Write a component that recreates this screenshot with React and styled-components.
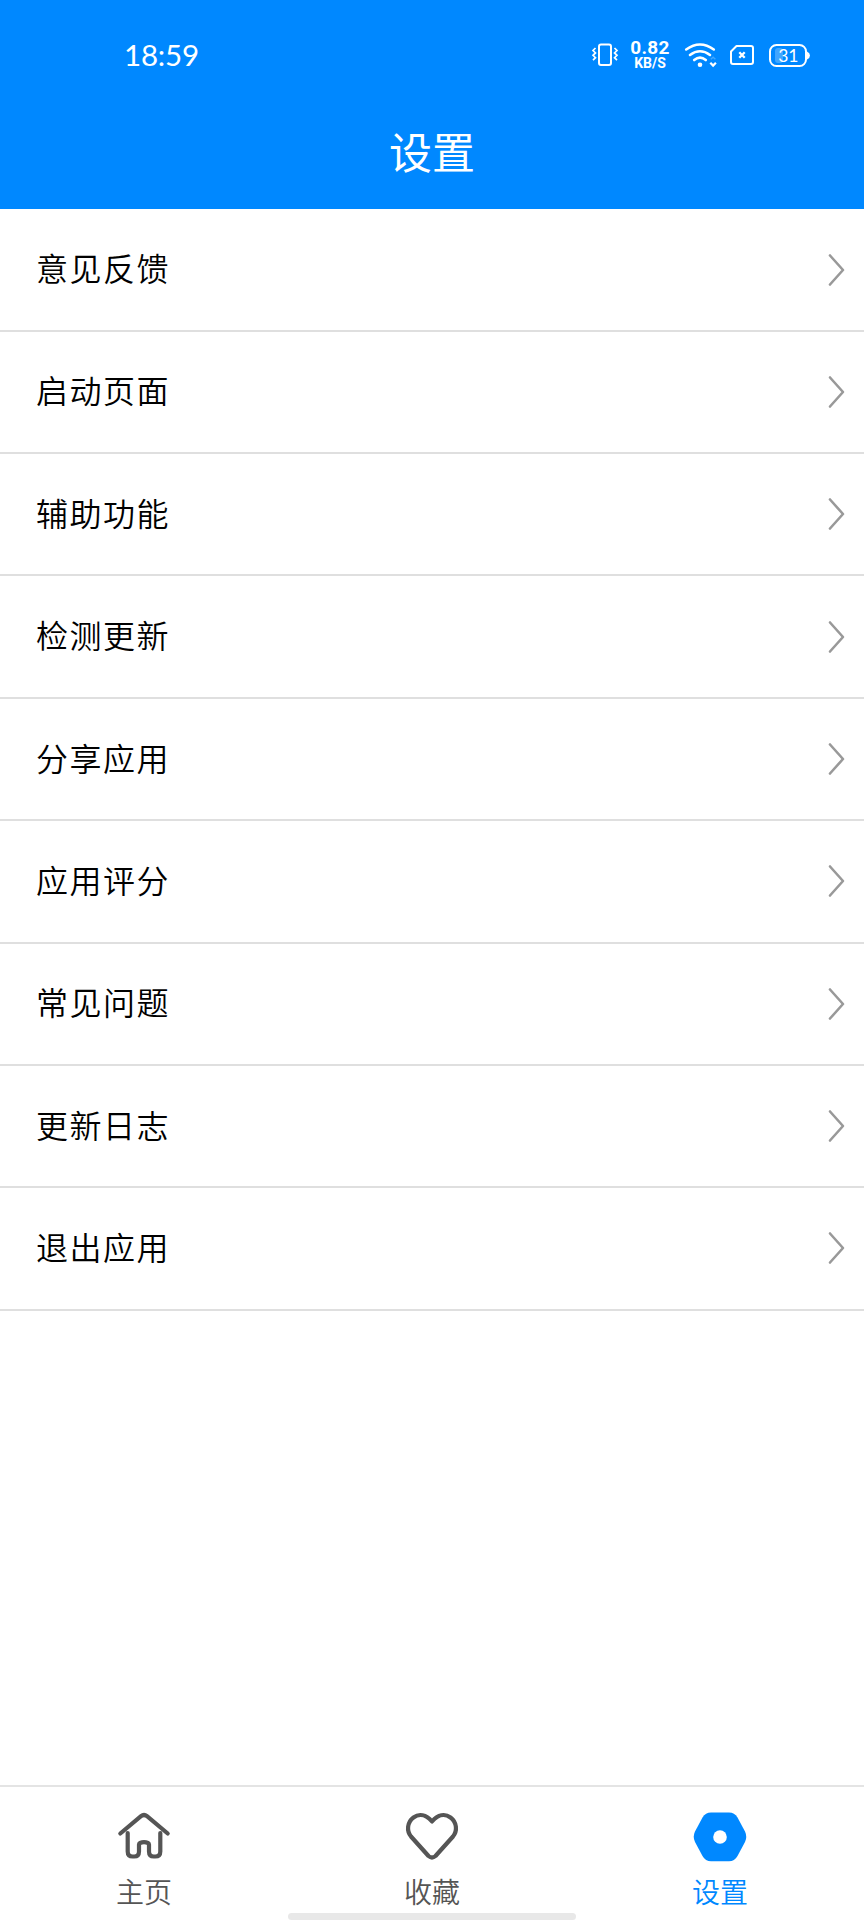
import React from "react";
import styled, { createGlobalStyle } from "styled-components";

const GlobalStyle = createGlobalStyle`
	* {
		box-sizing: border-box;
	}
	body {
		margin: 0;
		background-color: #fff;
		font-family: "Noto Sans CJK SC", sans-serif;
	}
`;

const Screen = styled.div`
	display: flex;
	flex-direction: column;
	width: 864px;
	height: 1920px;
	overflow: hidden;
	background-color: #fff;
`;

const Header = styled.header`
	height: 209.4px;
	flex-shrink: 0;
	background-color: #0088ff;
	color: #fff;
`;

const StatusBar = styled.div`
	display: flex;
	align-items: center;
	justify-content: space-between;
	height: 110px;
	padding: 0 54px 0 124px;
`;

const Clock = styled.span`
	font-family: Lato, sans-serif;
	font-size: 29.5px;
	line-height: 36px;
	letter-spacing: -0.2px;
`;

const StatusIcons = styled.div`
	display: flex;
	align-items: center;
`;

const StatusIcon = styled.svg`
	display: block;
	flex-shrink: 0;
	overflow: visible;
	margin-left: ${(props) => props.$gap || 0}px;
`;

const Speed = styled.div`
	width: 40px;
	margin-left: 12px;
	font-family: Roboto, sans-serif;
	font-weight: 700;
	text-align: center;
	white-space: nowrap;
`;

const SpeedValue = styled.div`
	font-size: 19px;
	line-height: 16px;
	letter-spacing: 0.3px;
`;

const SpeedUnit = styled.div`
	font-size: 14px;
	line-height: 14px;
`;

const Title = styled.h1`
	margin: 0;
	font-size: 43px;
	font-weight: 400;
	line-height: 80px;
	text-align: center;
`;

const List = styled.main`
	flex: 1;
`;

const Row = styled.div`
	display: flex;
	align-items: center;
	justify-content: space-between;
	height: 122.36px;
	padding: 0 19px 0 36px;
	border-bottom: 2px solid #dfdfdf;
`;

const RowLabel = styled.span`
	font-size: 32px;
	line-height: 48px;
	letter-spacing: 1.5px;
	color: #000;
	font-weight: 350;
	margin-top: -5px;
`;

const TabBar = styled.nav`
	display: grid;
	grid-template-columns: repeat(3, 1fr);
	height: 135px;
	flex-shrink: 0;
	border-top: 2px solid #e4e4e4;
	position: relative;
`;

const Tab = styled.div`
	display: flex;
	flex-direction: column;
	align-items: center;
	padding-top: 22px;
	color: ${(props) => (props.$active ? "#0088ff" : "#555")};
	svg {
		display: block;
		overflow: visible;
	}
`;

const TabLabel = styled.span`
	margin-top: 10px;
	font-size: 28px;
	line-height: 40px;
	font-weight: 350;
`;

const HomeIndicator = styled.div`
	position: absolute;
	left: 288px;
	bottom: 0;
	width: 288px;
	height: 7px;
	border-radius: 4px;
	background-color: #e8e8e8;
`;

const items = [
	"意见反馈",
	"启动页面",
	"辅助功能",
	"检测更新",
	"分享应用",
	"应用评分",
	"常见问题",
	"更新日志",
	"退出应用",
];

function VibrateIcon() {
	return (
		<StatusIcon width="26" height="24" viewBox="0 0 26 24" fill="none" stroke="currentColor">
			<rect x="7" y="1.5" width="12" height="20.5" rx="2" strokeWidth="2" />
			<path
				d="M3.5 5L1 7.5l2.5 2.4L1 12.3l2.5 2.4L1 17.2M22.500 5L25 7.500l-2.500 2.400L25 12.300l-2.500 2.400L25 17.200"
				strokeWidth="1.7"
			/>
		</StatusIcon>
	);
}

function WifiIcon() {
	return (
		<StatusIcon $gap={15} width="32" height="25" viewBox="0 0 32 25" fill="none" stroke="currentColor">
			<path
				d="M1.200 6.500Q15 -3.500 28.800 6.500M5 12Q15 4.500 25 12M9.200 17Q15 12.300 20.800 17"
				strokeWidth="2.600"
				strokeLinecap="round"
			/>
			<circle cx="15" cy="21.700" r="2.300" fill="currentColor" stroke="none" />
			<path d="M25.300 19.800l2.800 2.800 2.800-2.800" strokeWidth="2.200" />
			<path d="M25.800 16.300l2.300-2 2.300 2" strokeWidth="1.500" opacity="0.25" />
		</StatusIcon>
	);
}

function SimIcon() {
	return (
		<StatusIcon $gap={13} width="24" height="20" viewBox="0 0 24 20" fill="none" stroke="currentColor">
			<path d="M6.500 1H21q2 0 2 2v14q0 2-2 2H3q-2 0-2-2V6.500z" strokeWidth="2" strokeLinejoin="round" />
			<path d="M9.300 7.300l5.400 5.400M14.700 7.300l-5.400 5.400" strokeWidth="2.300" />
		</StatusIcon>
	);
}

function BatteryIcon() {
	return (
		<StatusIcon $gap={15} width="41" height="23" viewBox="0 0 41 23">
			<rect x="6" y="4" width="8" height="15" rx="3" fill="#fff" opacity="0.25" />
			<rect x="1" y="1" width="36" height="21" rx="6.500" fill="none" stroke="#fff" strokeWidth="2" />
			<path d="M38 7.500q3 1.500 3 4t-3 4z" fill="#fff" />
			<text x="19.300" y="17.800" fill="#fff" fontFamily="Lato, sans-serif" fontSize="17.500" textAnchor="middle">
				31
			</text>
		</StatusIcon>
	);
}

function Chevron() {
	return (
		<svg width="18" height="34" viewBox="0 0 18 34" fill="none" stroke="#999" strokeWidth="2.600">
			<path d="M3 2.500L16 17 3 31.500" strokeLinecap="round" strokeLinejoin="round" />
		</svg>
	);
}

function HomeIcon() {
	return (
		<svg width="52" height="52" viewBox="0 0 52 52" fill="none" stroke="currentColor" strokeWidth="4.200">
			<path
				d="M2.300 24.500L23 7.200Q26 4.800 29 7.200L49.700 24.500M9.700 24v18.500q0 5 5 5h1.500q4.800 0 4.800-5v-7q0-1 1-1.500 4-1.700 8 0 1 .5 1 1.500v7q0 5 4.800 5h1.500q5 0 5-5V24"
				strokeLinecap="round"
				strokeLinejoin="round"
			/>
		</svg>
	);
}

function HeartIcon() {
	return (
		<svg width="52" height="52" viewBox="0 0 52 52" fill="none" stroke="currentColor" strokeWidth="4.200">
			<path
				d="M26 12.500C20 5.500 13 4.500 7.500 8.500C1 13.300.5 22 5 27.500L22.500 47Q26 50 29.500 47L47 27.500C51.500 22 51 13.300 44.500 8.500C39 4.500 32 5.500 26 12.500z"
				strokeLinejoin="round"
			/>
		</svg>
	);
}

function SettingsIcon() {
	return (
		<svg width="52" height="52" viewBox="0 0 52 52">
			<path
				d="M17 3.500H35Q40.500 3.500 43.500 8.500L51 22.500Q53.500 27.800 51 33L43.500 47Q40.500 52.300 35 52.300H17Q11.500 52.300 8.500 47L1 33Q-1.500 27.800 1 22.500L8.500 8.500Q11.500 3.500 17 3.500z"
				fill="currentColor"
			/>
			<circle cx="26" cy="28" r="6.800" fill="#fff" />
		</svg>
	);
}

export default function App() {
	return (
		<>
			<GlobalStyle />
			<Screen>
				<Header>
					<StatusBar>
						<Clock>18:59</Clock>
						<StatusIcons>
							<VibrateIcon />
							<Speed>
								<SpeedValue>0.82</SpeedValue>
								<SpeedUnit>KB/S</SpeedUnit>
							</Speed>
							<WifiIcon />
							<SimIcon />
							<BatteryIcon />
						</StatusIcons>
					</StatusBar>
					<Title>设置</Title>
				</Header>
				<List>
					{items.map((item) => (
						<Row key={item}>
							<RowLabel>{item}</RowLabel>
							<Chevron />
						</Row>
					))}
				</List>
				<TabBar>
					<Tab>
						<HomeIcon />
						<TabLabel>主页</TabLabel>
					</Tab>
					<Tab>
						<HeartIcon />
						<TabLabel>收藏</TabLabel>
					</Tab>
					<Tab $active>
						<SettingsIcon />
						<TabLabel>设置</TabLabel>
					</Tab>
					<HomeIndicator />
				</TabBar>
			</Screen>
		</>
	);
}
